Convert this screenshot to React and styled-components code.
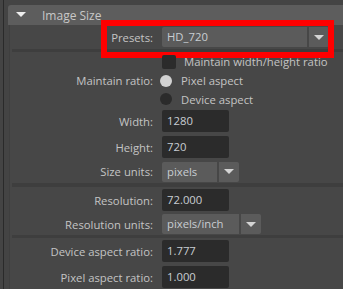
import React from "react";
import styled, { createGlobalStyle } from "styled-components";

const GlobalStyle = createGlobalStyle`
  html, body {
    margin: 0;
    padding: 0;
    background: #444444;
  }
  body {
    font-family: "Open Sans", "Noto Sans", sans-serif;
    font-size: 11.3px;
    color: #c6c6c6;
  }
`;

function App() {
  return (
    <>
      <GlobalStyle />
      <Page>
        <Gutter />
        <Main>
          <Header>
            <Caret />
            <HeaderTitle>Image Size</HeaderTitle>
          </Header>
          <Body>
            <Row height={24}>
              <Label>Presets:</Label>
              <Dropdown value="HD_720" width={145} />
              <Highlight />
            </Row>
            <Separator />
            <Row height={19}>
              <span />
              <Check>
                <CheckBox />
                <span>Maintain width/height ratio</span>
              </Check>
            </Row>
            <Row height={19}>
              <Label>Maintain ratio:</Label>
              <Check>
                <Radio on />
                <span>Pixel aspect</span>
              </Check>
            </Row>
            <Row height={18}>
              <span />
              <Check>
                <Radio />
                <span>Device aspect</span>
              </Check>
            </Row>
            <Row height={26}>
              <Label>Width:</Label>
              <Field>1280</Field>
            </Row>
            <Row height={26}>
              <Label>Height:</Label>
              <Field>720</Field>
            </Row>
            <Row height={23}>
              <Label>Size units:</Label>
              <Dropdown value="pixels" width={55} />
            </Row>
            <Separator thick />
            <Row height={26}>
              <Label>Resolution:</Label>
              <Field>72.000</Field>
            </Row>
            <Row height={22}>
              <Label>Resolution units:</Label>
              <Dropdown value="pixels/inch" width={77} />
            </Row>
            <Separator />
            <Row height={26}>
              <Label>Device aspect ratio:</Label>
              <Field>1.777</Field>
            </Row>
            <Row height={26}>
              <Label>Pixel aspect ratio:</Label>
              <Field>1.000</Field>
            </Row>
          </Body>
        </Main>
      </Page>
    </>
  );
}

function Dropdown({ value, width }) {
  return (
    <Select>
      <SelectValue style={{ width }}>{value}</SelectValue>
      <SelectArrow>
        <ArrowDown />
      </SelectArrow>
    </Select>
  );
}

export default App;

const Page = styled.div`
  display: flex;
  width: 343px;
  height: 289px;
  overflow: hidden;
  background: #444444;
`;

const Gutter = styled.div`
  width: 3px;
  flex: none;
  border-right: 1px solid #2a2a2a;
`;

const Main = styled.div`
  flex: 1;
  display: flex;
  flex-direction: column;
  padding: 5px 0 0 4px;
`;

const Header = styled.div`
  height: 20px;
  flex: none;
  display: flex;
  align-items: center;
  background: #5d5d5d;
  border-radius: 3px 0 0 0;
  padding-left: 8px;
`;

const Caret = styled.div`
  width: 0;
  height: 0;
  border-left: 5px solid transparent;
  border-right: 5px solid transparent;
  border-top: 5px solid #eeeeee;
  margin-top: -1px;
`;

const HeaderTitle = styled.span`
  margin-left: 16px;
  color: #c8c8c8;
  font-size: 12px;
`;

const Body = styled.div`
  flex: 1;
  margin-left: 1px;
  border-left: 1px solid #3f3f3f;
  background: #474747;
  display: flex;
  flex-direction: column;
`;

const Row = styled.div`
  position: relative;
  height: ${(p) => p.height}px;
  flex: none;
  display: grid;
  grid-template-columns: 143px auto;
  column-gap: 9px;
  align-items: center;
  justify-content: start;
`;

const Label = styled.span`
  text-align: right;
  white-space: nowrap;
  color: #c4c4c4;
`;

const Field = styled.div`
  width: 62px;
  height: 22px;
  line-height: 22px;
  padding-left: 5px;
  background: #2b2b2b;
  border-radius: 2px;
  color: #c8cdd2;
`;

const Select = styled.div`
  display: flex;
  gap: 2px;
  height: 20px;
`;

const SelectValue = styled.div`
  height: 20px;
  line-height: 20px;
  padding-left: 5px;
  box-sizing: border-box;
  background: #5b5b5b;
  border-radius: 2px 0 0 2px;
  color: #c8cdd2;
`;

const SelectArrow = styled.div`
  width: 20px;
  height: 20px;
  display: flex;
  align-items: center;
  justify-content: center;
  background: #5b5b5b;
  border-radius: 0 2px 2px 0;
`;

const ArrowDown = styled.div`
  width: 0;
  height: 0;
  border-left: 5px solid transparent;
  border-right: 5px solid transparent;
  border-top: 5px solid #d4d4d4;
`;

const Separator = styled.div`
  height: ${(p) => (p.thick ? 4 : 3)}px;
  flex: none;
  margin-left: 2px;
  background: #3e3e3e;
`;

const Check = styled.div`
  display: flex;
  align-items: center;
  gap: 8px;
  white-space: nowrap;
  color: #c4c4c4;
`;

const CheckBox = styled.div`
  width: 14px;
  height: 14px;
  background: #2b2b2b;
  border-radius: 2px;
`;

const Radio = styled.div`
  width: 12px;
  height: 12px;
  margin-left: -2px;
  margin-right: 1px;
  border-radius: 50%;
  background: ${(p) => (p.on ? "#d2d2d2" : "#2b2b2b")};
`;

const Highlight = styled.div`
  position: absolute;
  left: 91px;
  top: -5px;
  width: 221px;
  height: 26px;
  border: 6px solid #ff0000;
  pointer-events: none;
`;
